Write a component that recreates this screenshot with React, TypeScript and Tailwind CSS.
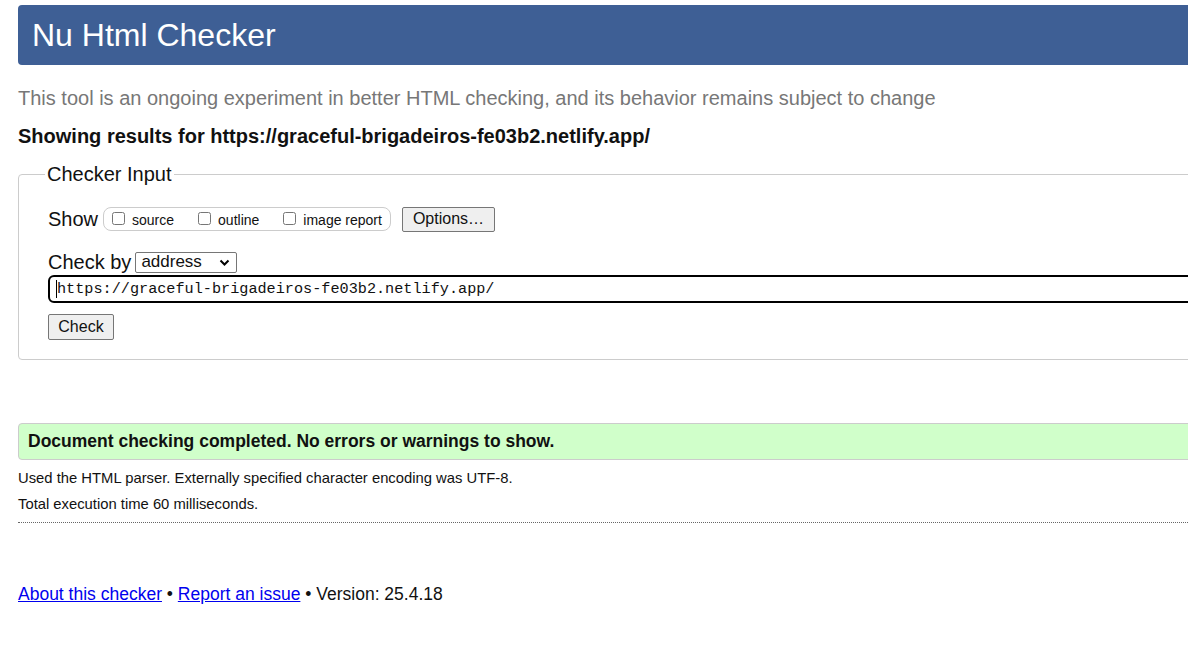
import React from 'react';

const sans = "font-['Liberation_Sans',Arial,sans-serif]";

export default function App() {
  return (
    <div className={`w-[1188px] h-[652px] overflow-hidden bg-white text-[#111] ${sans}`}>
      <div className="w-[1400px] pl-[18px] pt-[5px]">
        {/* Header */}
        <div className="h-[60px] bg-[#3e5f95] rounded-[4px] flex items-center pl-[14px]">
          <h1 className="text-[32px] leading-none text-white font-normal">Nu Html Checker</h1>
        </div>

        <p className="mt-[21px] text-[20px] leading-[24px] text-[#777]">
          This tool is an ongoing experiment in better HTML checking, and its behavior remains subject to change
        </p>
        <p className="mt-[15px] text-[20px] leading-[22px] font-bold">
          Showing results for https://graceful-brigadeiros-fe03b2.netlify.app/
        </p>

        {/* Checker input */}
        <fieldset className="mt-[16px] border border-[#ccc] rounded-[4px] h-[197px] pl-[29px] pr-0 pt-0 m-0">
          <legend className="text-[20px] leading-[22px] px-[2px] ml-[-3px]">Checker Input</legend>

          <div className="flex items-center mt-[21px] h-[26px]">
            <span className="text-[20px] leading-none mr-[5px]">Show</span>
            <div className="flex items-center h-[24px] border border-[#ccc] rounded-[8px] pl-[8px] pr-[8px] text-[14px]">
              <label className="flex items-end mr-[24px] leading-none">
                <input type="checkbox" className="w-[13px] h-[13px] mr-[7px] mb-[2px]" />
                source
              </label>
              <label className="flex items-end mr-[24px] leading-none">
                <input type="checkbox" className="w-[13px] h-[13px] mr-[7px] mb-[2px]" />
                outline
              </label>
              <label className="flex items-end leading-none">
                <input type="checkbox" className="w-[13px] h-[13px] mr-[7px] mb-[2px]" />
                image report
              </label>
            </div>
            <button className="ml-[11px] h-[25px] px-[10px] text-[16px] leading-none bg-[#efefef] border border-[#767676] rounded-[2px]">
              Options…
            </button>
          </div>

          <div className="flex items-center mt-[18px] h-[24px]">
            <span className="text-[20px] leading-none mr-[4px]">Check by</span>
            <div className="relative w-[102px] h-[21px] border border-[#767676] rounded-[2px] flex items-center pl-[5px] text-[17px]">
              address
              <svg className="absolute right-[6px] top-[6px]" width="11" height="8" viewBox="0 0 11 8">
                <path d="M1.5 1.5 L5.5 5.5 L9.5 1.5" fill="none" stroke="#000" strokeWidth="2" />
              </svg>
            </div>
          </div>

          <div className="mt-[1px] h-[28px] border-2 border-black rounded-[6px] flex items-center pl-[6px] font-['Liberation_Mono',monospace] text-[15.2px]">
            <span className="border-l border-black leading-[18px]">https://graceful-brigadeiros-fe03b2.netlify.app/</span>
          </div>

          <button className="mt-[11px] h-[26px] w-[66px] text-[16px] leading-none bg-[#efefef] border border-[#767676] rounded-[2px]">
            Check
          </button>
        </fieldset>

        {/* Result */}
        <div className="mt-[63px] h-[37px] bg-[#d0ffca] border border-[#ccc] rounded-[4px] flex items-center pl-[9px]">
          <span className="text-[17.5px] font-bold">Document checking completed. No errors or warnings to show.</span>
        </div>

        <p className="mt-[10px] text-[14.8px] leading-[16px]">Used the HTML parser. Externally specified character encoding was UTF-8.</p>
        <p className="mt-[10px] text-[14.8px] leading-[16px]">Total execution time 60 milliseconds.</p>
        <div className="mt-[10px] border-t border-dotted border-[#666]" />

        <p className="mt-[61px] text-[17.5px] leading-[20px]">
          <a href="#" className="text-[#0000ee] underline">About this checker</a>
          {' • '}
          <a href="#" className="text-[#0000ee] underline">Report an issue</a>
          {' • Version: 25.4.18'}
        </p>
      </div>
    </div>
  );
}
